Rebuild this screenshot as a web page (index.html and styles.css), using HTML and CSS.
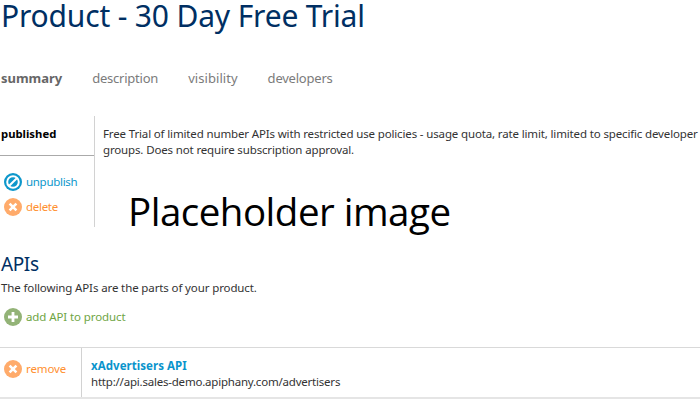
FILE: index.html
```
<!DOCTYPE html>
<html lang="en">
<head>
<meta charset="utf-8">
<title>Product - 30 Day Free Trial</title>
<link rel="stylesheet" href="styles.css">
</head>
<body>
<h1>Product - 30 Day Free Trial</h1>
<nav class="tabs">
  <a class="active">summary</a>
  <a>description</a>
  <a class="wide">visibility</a>
  <a>developers</a>
</nav>
<section class="summary">
  <aside class="side">
    <div class="status">published</div>
    <a class="action blue">
      <svg viewBox="0 0 18 18"><circle cx="9" cy="9" r="9" fill="#0d97cb"/><circle cx="9" cy="9" r="5.8" fill="none" stroke="#fff" stroke-width="2"/><path d="M5.2 12.8 12.8 5.2" stroke="#fff" stroke-width="2"/></svg>
      <span>unpublish</span>
    </a>
    <a class="action orange">
      <svg viewBox="0 0 18 18"><circle cx="9" cy="9" r="9" fill="#ffab6b"/><path d="M5.6 5.6l6.8 6.8M12.4 5.6l-6.8 6.8" stroke="#fff" stroke-width="2.6"/></svg>
      <span>delete</span>
    </a>
  </aside>
  <div class="main">
    <p>Free Trial of limited number APIs with restricted use policies - usage quota, rate limit, limited to specific developer<br>groups. Does not require subscription approval.</p>
    <div class="placeholder">Placeholder image</div>
  </div>
</section>
<h2>APIs</h2>
<p class="intro">The following APIs are the parts of your product.</p>
<a class="action green">
  <svg viewBox="0 0 18 18"><circle cx="9" cy="9" r="9" fill="#93b377"/><path d="M9 4v10M4 9h10" stroke="#fff" stroke-width="2.8"/></svg>
  <span>add API to product</span>
</a>
<div class="row">
  <div class="cell">
    <a class="action orange">
      <svg viewBox="0 0 18 18"><circle cx="9" cy="9" r="9" fill="#ffab6b"/><path d="M5.6 5.6l6.8 6.8M12.4 5.6l-6.8 6.8" stroke="#fff" stroke-width="2.6"/></svg>
      <span>remove</span>
    </a>
  </div>
  <div class="api">
    <b>xAdvertisers API</b>
    <div class="url">http://api.sales-demo.apiphany.com/advertisers</div>
  </div>
</div>
</body>
</html>
```
FILE: styles.css
```
* { box-sizing: border-box; }
body { margin: 0; height: 401px; overflow: hidden; background: #fff; color: #333; font: 11.5px/16px "Noto Sans", sans-serif; white-space: nowrap; }
h1, h2, p { margin: 0; font-weight: 400; }
h1 { height: 68px; padding-left: 1px; color: #002f63; font-size: 30px; line-height: 32px; letter-spacing: -0.17px; }
.tabs { display: flex; gap: 30px; height: 48px; padding-left: 1px; color: #7b7b7b; font-size: 13px; line-height: 20px; letter-spacing: -0.22px; }
.tabs .wide { letter-spacing: 0.05px; }
.tabs .active { font-weight: 700; color: #666; letter-spacing: -0.03px; }
.summary { display: flex; height: 111px; }
.side { flex: none; width: 95px; border-right: 1px solid #d2d2d2; }
.status { height: 40px; margin-bottom: 17px; padding-left: 1px; border-bottom: 1px solid #aaa; color: #000; font-weight: 700; font-size: 11.3px; line-height: 36px; }
.action { display: flex; align-items: center; gap: 4px; height: 18px; margin-left: 4px; letter-spacing: -0.1px; }
.action + .action { margin-top: 7px; }
.action svg { width: 18px; height: 18px; flex: none; }
.blue { color: #0d97cb; letter-spacing: -0.3px; }
.side .orange { letter-spacing: -0.3px; }
.orange { color: #ff902f; }
.green { color: #6fa544; }
.main { padding: 10px 0 0 8px; letter-spacing: -0.145px; }
.placeholder { margin: 26px 0 0 25px; color: #000; font: 38.5px/54px "Open Sans", sans-serif; letter-spacing: -0.5px; }
h2 { margin-top: 24px; height: 29px; color: #002f63; font-size: 19px; line-height: 26px; padding-left: 1px; letter-spacing: -0.4px; }
.intro { height: 28px; padding-left: 1px; letter-spacing: -0.12px; }
.row { display: flex; height: 52px; margin-top: 21px; border-top: 1px solid #d9d9d9; border-bottom: 2px solid #e5e5e5; }
.cell { flex: none; width: 82px; padding-top: 12px; border-right: 1px solid #d2d2d2; }
.api { padding: 10px 0 0 9px; }
.api b { color: #0a94cc; letter-spacing: 0.05px; }
.url { letter-spacing: -0.21px; }
```
